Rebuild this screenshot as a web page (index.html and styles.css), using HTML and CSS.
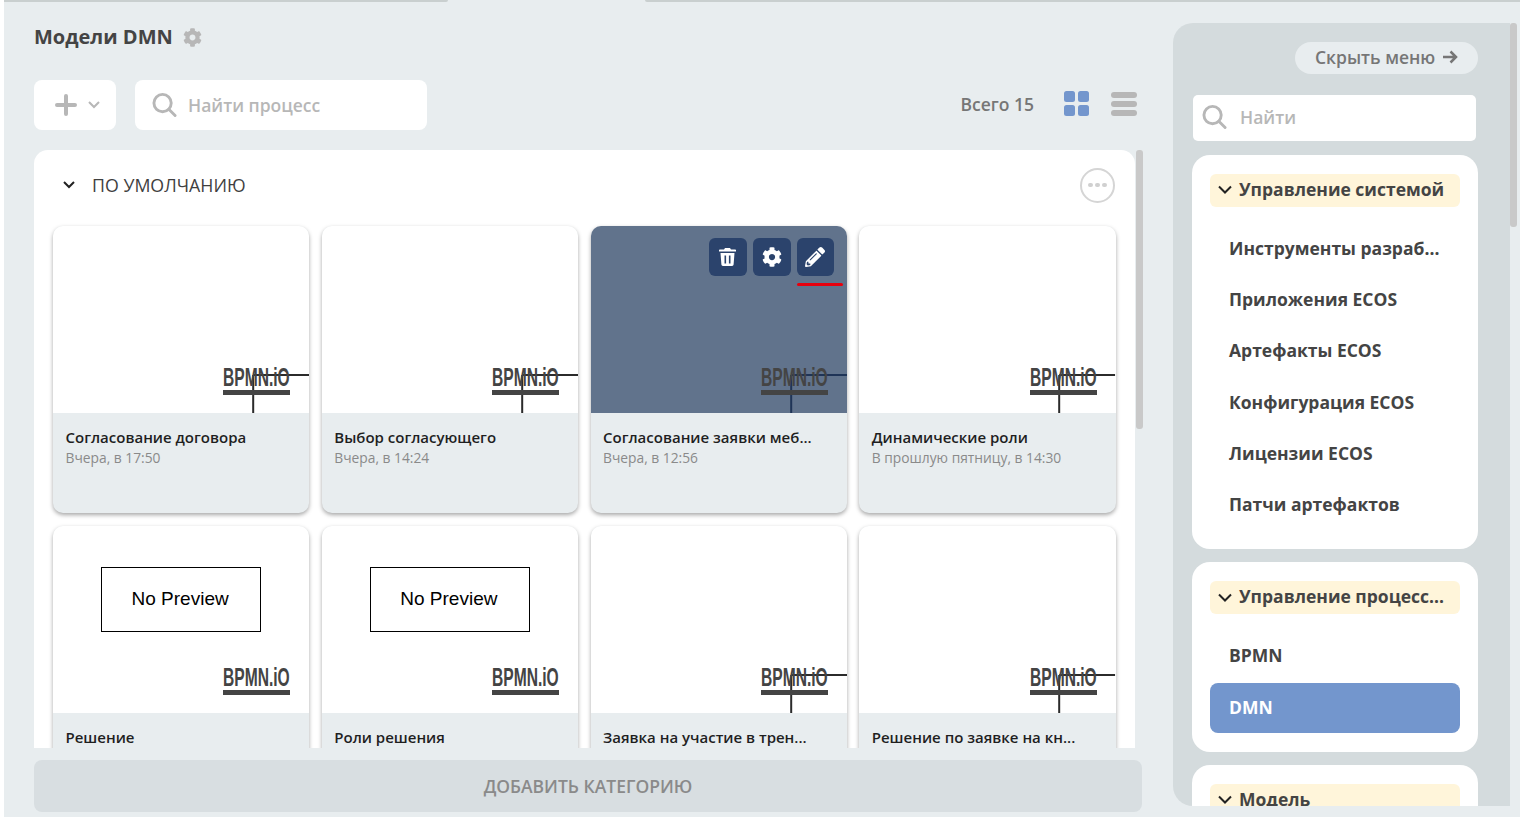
FILE: index.html
```html
<!DOCTYPE html>
<html lang="ru">
  <head>
    <meta charset="UTF-8" />
    <title>Модели DMN</title>
    <link rel="stylesheet" href="styles.css">
  </head>

  <body>
    <svg class="defs" width="0" height="0">
      <defs>
        <symbol id="gear" viewBox="0 0 512 512">
          <path d="M487.4 315.7l-42.6-24.6c4.3-23.2 4.3-47 0-70.2l42.6-24.6c4.9-2.8 7.1-8.6 5.5-14-11.1-35.6-30-67.8-54.7-94.6-3.8-4.1-10-5.1-14.8-2.3L380.8 110c-17.9-15.4-38.5-27.3-60.8-35.1V25.8c0-5.6-3.9-10.5-9.4-11.7-36.7-8.2-74.3-7.8-109.2 0-5.5 1.2-9.4 6.1-9.4 11.7V75c-22.2 7.9-42.8 19.8-60.8 35.1L88.7 85.5c-4.9-2.8-11-1.9-14.8 2.3-24.7 26.7-43.6 58.9-54.7 94.6-1.7 5.4.6 11.2 5.5 14L67.3 221c-4.3 23.2-4.3 47 0 70.2l-42.6 24.6c-4.9 2.8-7.1 8.6-5.5 14 11.1 35.6 30 67.8 54.7 94.6 3.8 4.1 10 5.1 14.8 2.3l42.6-24.6c17.9 15.4 38.5 27.3 60.8 35.1v49.2c0 5.6 3.9 10.5 9.4 11.7 36.7 8.2 74.3 7.8 109.2 0 5.5-1.2 9.4-6.1 9.4-11.7v-49.2c22.2-7.9 42.8-19.8 60.8-35.1l42.6 24.6c4.9 2.8 11 1.9 14.8-2.3 24.7-26.7 43.6-58.9 54.7-94.6 1.5-5.5-.7-11.3-5.6-14.1zM256 336c-44.1 0-80-35.9-80-80s35.9-80 80-80 80 35.9 80 80-35.9 80-80 80z"/>
        </symbol>
        <symbol id="loupe" viewBox="0 0 26 26">
          <circle cx="11" cy="11" r="9" fill="none" stroke="currentColor" stroke-width="3"/>
          <path d="M17.500 17.500L24 24" fill="none" stroke="currentColor" stroke-width="3" stroke-linecap="round"/>
        </symbol>
        <symbol id="chevron" viewBox="0 0 14 10">
          <path d="M2 2l5 5 5-5" fill="none" stroke="currentColor" stroke-width="2"/>
        </symbol>
        <symbol id="chevron_wide" viewBox="0 0 14 10">
          <path d="M1 1.500l6 6 6-6" fill="none" stroke="currentColor" stroke-width="2"/>
        </symbol>
        <symbol id="diagram-lines" viewBox="0 0 256 187" preserveAspectRatio="none">
          <path d="M200 149H256M200 149V187" fill="none" stroke="currentColor" stroke-width="2"/>
        </symbol>
      </defs>
    </svg>

    <div class="top_strip">
      <span class="top_strip_left"></span>
      <span class="top_strip_right"></span>
    </div>

    <div class="page">
      <main class="content">
        <div class="title_row">
          <h1>Модели DMN</h1>
          <svg class="title_gear"><use href="#gear"/></svg>
        </div>

        <div class="toolbar">
          <button class="add_btn">
            <svg class="plus" viewBox="0 0 22 22"><path d="M11 2v18M2 11h18"/></svg>
            <svg class="add_chevron"><use href="#chevron"/></svg>
          </button>
          <div class="search">
            <svg class="loupe"><use href="#loupe"/></svg>
            <span>Найти процесс</span>
          </div>
          <span class="total">Всего 15</span>
          <div class="view_grid"><i></i><i></i><i></i><i></i></div>
          <div class="view_list"><i></i><i></i><i></i></div>
        </div>

        <div class="category_wrap">
          <section class="category">
            <div class="category_head">
              <svg class="category_chevron"><use href="#chevron"/></svg>
              <span>ПО УМОЛЧАНИЮ</span>
              <div class="more"><i></i><i></i><i></i></div>
            </div>

            <div class="cards">
              <article class="card">
                <div class="preview">
                  <svg class="lines"><use href="#diagram-lines"/></svg>
                  <div class="watermark"><span>BPMN.iO</span></div>
                </div>
                <div class="info">
                  <p class="name">Согласование договора</p>
                  <p class="date">Вчера, в 17:50</p>
                </div>
              </article>
              <article class="card">
                <div class="preview">
                  <svg class="lines"><use href="#diagram-lines"/></svg>
                  <div class="watermark"><span>BPMN.iO</span></div>
                </div>
                <div class="info">
                  <p class="name">Выбор согласующего</p>
                  <p class="date">Вчера, в 14:24</p>
                </div>
              </article>
              <article class="card hovered">
                <div class="preview">
                  <svg class="lines"><use href="#diagram-lines"/></svg>
                  <div class="watermark"><span>BPMN.iO</span></div>
                  <div class="actions">
                    <button class="action">
                      <svg class="trash" viewBox="0 0 17 18"><path fill-rule="evenodd" d="M6 0h5l1 1.500h4.200c.5 0 .8.300.8.800v1.200H0V2.300c0-.5.300-.8.800-.8H5zM1.500 5h14l-.9 11.600c-.1.800-.7 1.400-1.500 1.400H3.900c-.8 0-1.400-.6-1.500-1.400zM5.500 7.500v8h1.600v-8zM9.900 7.500v8h1.600v-8z"/></svg>
                    </button>
                    <button class="action">
                      <svg class="cog"><use href="#gear"/></svg>
                    </button>
                    <div class="action_edit">
                      <button class="action narrow">
                        <svg class="pencil" viewBox="0 0 512 512"><path d="M497.900 142.100l-46.100 46.100c-4.700 4.700-12.300 4.700-17 0l-111-111c-4.700-4.700-4.700-12.300 0-17l46.100-46.100c18.700-18.700 49.100-18.700 67.900 0l60.100 60.100c18.800 18.700 18.800 49.100 0 67.900zM284.200 99.800L21.600 362.400.4 483.900c-2.900 16.400 11.400 30.600 27.800 27.800l121.500-21.300 262.600-262.600c4.700-4.700 4.700-12.300 0-17l-111-111c-4.800-4.700-12.400-4.700-17.100 0zM124.100 339.900c-5.500-5.500-5.500-14.300 0-19.800l154-154c5.500-5.500 14.300-5.500 19.800 0s5.500 14.300 0 19.800l-154 154c-5.500 5.500-14.300 5.500-19.800 0zM88 424h48v36.300l-64.500 11.300-31.100-31.100L51.700 376H88v48z"/></svg>
                      </button>
                      <span class="edit_mark"></span>
                    </div>
                  </div>
                </div>
                <div class="info">
                  <p class="name">Согласование заявки меб...</p>
                  <p class="date">Вчера, в 12:56</p>
                </div>
              </article>
              <article class="card">
                <div class="preview">
                  <svg class="lines"><use href="#diagram-lines"/></svg>
                  <div class="watermark"><span>BPMN.iO</span></div>
                </div>
                <div class="info">
                  <p class="name">Динамические роли</p>
                  <p class="date">В прошлую пятницу, в 14:30</p>
                </div>
              </article>

              <article class="card">
                <div class="preview">
                  <div class="no_preview">No Preview</div>
                  <div class="watermark"><span>BPMN.iO</span></div>
                </div>
                <div class="info">
                  <p class="name">Решение</p>
                </div>
              </article>
              <article class="card">
                <div class="preview">
                  <div class="no_preview">No Preview</div>
                  <div class="watermark"><span>BPMN.iO</span></div>
                </div>
                <div class="info">
                  <p class="name">Роли решения</p>
                </div>
              </article>
              <article class="card">
                <div class="preview">
                  <svg class="lines"><use href="#diagram-lines"/></svg>
                  <div class="watermark"><span>BPMN.iO</span></div>
                </div>
                <div class="info">
                  <p class="name">Заявка на участие в трен...</p>
                </div>
              </article>
              <article class="card">
                <div class="preview">
                  <svg class="lines"><use href="#diagram-lines"/></svg>
                  <div class="watermark"><span>BPMN.iO</span></div>
                </div>
                <div class="info">
                  <p class="name">Решение по заявке на кн...</p>
                </div>
              </article>
            </div>
          </section>
          <div class="category_scroll"></div>
        </div>

        <button class="add_category">ДОБАВИТЬ КАТЕГОРИЮ</button>
      </main>

      <aside class="menu">
        <div class="hide_row">
          <button class="hide_btn">
            Скрыть меню
            <svg viewBox="0 0 16 14"><path d="M1 7h13M8.500 1.500L14 7l-5.500 5.500"/></svg>
          </button>
        </div>
        <div class="menu_search">
          <svg class="loupe"><use href="#loupe"/></svg>
          <span>Найти</span>
        </div>

        <section class="group">
          <div class="group_head">
            <svg><use href="#chevron_wide"/></svg>
            <span>Управление системой</span>
          </div>
          <a class="group_item">Инструменты разраб...</a>
          <a class="group_item">Приложения ECOS</a>
          <a class="group_item">Артефакты ECOS</a>
          <a class="group_item">Конфигурация ECOS</a>
          <a class="group_item">Лицензии ECOS</a>
          <a class="group_item">Патчи артефактов</a>
        </section>

        <section class="group">
          <div class="group_head">
            <svg><use href="#chevron_wide"/></svg>
            <span>Управление процесс...</span>
          </div>
          <a class="group_item">BPMN</a>
          <a class="group_item active">DMN</a>
        </section>

        <section class="group">
          <div class="group_head">
            <svg><use href="#chevron_wide"/></svg>
            <span>Модель</span>
          </div>
        </section>
      </aside>

      <div class="page_scroll"><span></span></div>
    </div>
  </body>
</html>
```

FILE: styles.css
```css
* {
  padding: 0;
  margin: 0;
  box-sizing: border-box;
}

body {
  height: 817px;
  overflow: hidden;
  background: #fff;
  font-family: "Open Sans", sans-serif;
  color: #444;
}

button {
  border: none;
  font-family: inherit;
}

.defs {
  display: block;
  height: 0;
}

.top_strip {
  display: flex;
  justify-content: space-between;
  height: 2px;
  margin-left: 4px;
  background: #e8edef;
}

.top_strip_left {
  width: 444px;
  background: #c9cfcf;
  border-bottom-right-radius: 2px;
}

.top_strip_right {
  width: 875px;
  background: #c9cfcf;
  border-bottom-left-radius: 2px;
}

.page {
  display: flex;
  height: 815px;
  margin-left: 4px;
  background: #e8edef;
}

.content {
  display: flex;
  flex-direction: column;
  width: 1169px;
  padding: 0 0 0 30px;
}

.title_row {
  display: flex;
  align-items: center;
  gap: 10px;
  height: 22px;
  margin-top: 24px;
}

.title_row h1 {
  font-size: 20px;
  font-weight: 700;
  line-height: 22px;
  color: #444;
}

.title_gear {
  width: 19px;
  height: 19px;
  fill: #b7b7b7;
}

.toolbar {
  display: flex;
  align-items: center;
  height: 50px;
  margin-top: 32px;
}

.add_btn {
  display: flex;
  align-items: center;
  gap: 10px;
  width: 82px;
  height: 50px;
  padding-left: 21px;
  border-radius: 8px;
  background: #fff;
}

.plus {
  width: 22px;
  height: 22px;
  fill: none;
  stroke: #b7b7b7;
  stroke-width: 4;
  stroke-linecap: round;
}

.add_chevron {
  width: 14px;
  height: 10px;
  color: #b7b7b7;
}

.search {
  display: flex;
  align-items: center;
  width: 292px;
  height: 50px;
  margin-left: 19px;
  padding-left: 17px;
  border-radius: 8px;
  background: #fff;
  font-size: 17.500px;
  font-weight: 600;
  color: #b7b7b7;
}

.loupe {
  width: 25px;
  height: 26px;
  color: #b7b7b7;
  flex: none;
}

.search span {
  margin-left: 11px;
}

.total {
  margin-left: auto;
  margin-bottom: 2px;
  font-size: 17.500px;
  font-weight: 600;
  color: #767676;
}

.view_grid {
  display: grid;
  grid-template-columns: 11px 11px;
  gap: 3px;
  margin-left: 30px;
  margin-bottom: 3px;
}

.view_grid i {
  height: 11px;
  border-radius: 2.500px;
  background: #7396cd;
}

.view_list {
  display: flex;
  flex-direction: column;
  gap: 3px;
  width: 26px;
  margin-left: 22px;
  margin-right: 36px;
  margin-bottom: 3px;
}

.view_list i {
  height: 6px;
  border-radius: 3px;
  background: #b7b7b7;
}

.category_wrap {
  display: flex;
  gap: 1px;
  height: 598px;
  margin-top: 20px;
  overflow: hidden;
}

.category {
  width: 1101px;
  height: 660px;
  padding: 0 19px;
  border-radius: 14px 14px 0 0;
  background: #fff;
}

.category_scroll {
  width: 7px;
  height: 279px;
  border-radius: 3px;
  background: #c9c9c9;
}

.category_head {
  display: flex;
  align-items: center;
  height: 76px;
  padding-left: 9px;
  padding-bottom: 6px;
  font-size: 17.800px;
  font-weight: 500;
  color: #3f3f3f;
}

.category_chevron {
  width: 14px;
  height: 10px;
  margin-right: 16px;
  color: #222;
}

.more {
  display: flex;
  align-items: center;
  justify-content: center;
  gap: 2.500px;
  width: 35px;
  height: 35px;
  margin-left: auto;
  margin-right: 1px;
  border: 2px solid #d5d5d5;
  border-radius: 50%;
}

.more i {
  width: 4.500px;
  height: 4.500px;
  border-radius: 50%;
  background: #d0d0d0;
}

.cards {
  display: grid;
  grid-template-columns: repeat(4, 256.250px);
  column-gap: 12.500px;
  row-gap: 13px;
}

.card {
  height: 287px;
  border-radius: 10px;
  overflow: hidden;
  background: #e8edef;
  box-shadow: 0 2px 4px rgba(0, 0, 0, 0.35);
}

.preview {
  position: relative;
  display: flex;
  justify-content: center;
  height: 187px;
  background: #fff;
}

.lines {
  position: absolute;
  inset: 0;
  width: 100%;
  height: 100%;
  color: #2b2b2b;
}

.watermark {
  position: absolute;
  right: 19px;
  bottom: 18px;
  width: 67px;
  border-bottom: 5px solid #444;
  font-family: "Liberation Sans", sans-serif;
  font-size: 26px;
  font-weight: 700;
  line-height: 26px;
  white-space: nowrap;
  color: #444;
}

/* no condensed font installed, so the text is squeezed to the logo's width */
.watermark span {
  display: inline-block;
  transform: scaleX(0.6);
  transform-origin: left;
}

.no_preview {
  width: 160px;
  height: 65px;
  margin-top: 41px;
  padding-right: 2px;
  border: 1px solid #000;
  border-bottom-width: 1.500px;
  font-family: "Liberation Sans", sans-serif;
  font-size: 19px;
  line-height: 61px;
  text-align: center;
  color: #000;
}

.info {
  padding: 14px 12.500px 0;
}

.name {
  font-size: 15px;
  font-weight: 600;
  line-height: 20px;
  color: #1f1f1f;
  white-space: nowrap;
}

.date {
  margin-top: 2px;
  font-size: 13.800px;
  line-height: 18px;
  color: #8a8a8a;
}

.hovered .preview {
  background: #61738c;
}

.hovered .lines {
  color: #1f3457;
}

.actions {
  position: absolute;
  top: 12px;
  right: 0;
  display: flex;
  gap: 6px;
}

.action {
  display: flex;
  align-items: center;
  justify-content: center;
  width: 38px;
  height: 38px;
  border-radius: 6px;
  background: #2b436c;
}

.action svg {
  fill: #fff;
}

.trash {
  width: 17px;
  height: 18px;
}

.cog,
.pencil {
  width: 20px;
  height: 20px;
}

.action.narrow {
  width: 37px;
}

.action_edit {
  display: flex;
  flex-direction: column;
  gap: 7px;
  width: 50px;
}

.edit_mark {
  width: 46px;
  height: 3px;
  border-radius: 2px;
  background: #e8000d;
}

.add_category {
  width: 1108px;
  height: 52px;
  margin-top: 12px;
  border-radius: 8px;
  background: #d8dee1;
  font-size: 17.500px;
  font-weight: 600;
  color: #8a8a8a;
}

.menu {
  width: 337px;
  height: 783px;
  margin-top: 21px;
  padding: 0 32px 0 19px;
  border-radius: 20px 0 0 20px;
  background: #d4dbdd;
  overflow: hidden;
}

.hide_row {
  display: flex;
  justify-content: flex-end;
  margin-top: 19px;
}

.hide_btn {
  display: flex;
  align-items: center;
  gap: 7px;
  width: 183px;
  height: 32px;
  padding-left: 20px;
  padding-bottom: 2px;
  border-radius: 16px;
  background: #e8edef;
  font-size: 17.500px;
  font-weight: 600;
  color: #767676;
}

.hide_btn svg {
  width: 16px;
  height: 14px;
  fill: none;
  stroke: #767676;
  stroke-width: 2.500;
}

.menu_search {
  display: flex;
  align-items: center;
  width: 283px;
  height: 46px;
  margin: 21px 0 1px 1px;
  padding-left: 9px;
  padding-bottom: 2px;
  border-radius: 5px;
  background: #fff;
  font-size: 17.500px;
  font-weight: 600;
  color: #b7b7b7;
}

.menu_search span {
  margin-left: 13px;
}

.group {
  width: 286px;
  margin-top: 14px;
  padding: 19px 18px 19px;
  border-radius: 18px;
  background: #fff;
}

.menu_search + .group {
  margin-top: 13.500px;
}

.group + .group {
  margin-top: 13px;
}

.group_head {
  display: flex;
  align-items: center;
  height: 33px;
  margin-bottom: 17px;
  padding-left: 8px;
  border-radius: 6px;
  background: #fff5da;
  font-size: 17.500px;
  font-weight: 700;
  color: #444;
}

.group_head span {
  margin-bottom: 3px;
}

.group_head svg {
  width: 14px;
  height: 10px;
  margin-right: 7px;
  color: #222;
}

.group_item {
  display: block;
  height: 50px;
  margin-top: 1.400px;
  padding-left: 19px;
  border-radius: 8px;
  font-size: 17.500px;
  font-weight: 700;
  line-height: 48px;
  color: #444;
}

.group_item.active {
  background: #7396cd;
  color: #fff;
}

.page_scroll {
  width: 10px;
  height: 815px;
  background: #e8edef;
}

.page_scroll span {
  display: block;
  width: 7px;
  height: 204px;
  margin-top: 21px;
  border-radius: 3px;
  background: #c9c9c9;
}
```
